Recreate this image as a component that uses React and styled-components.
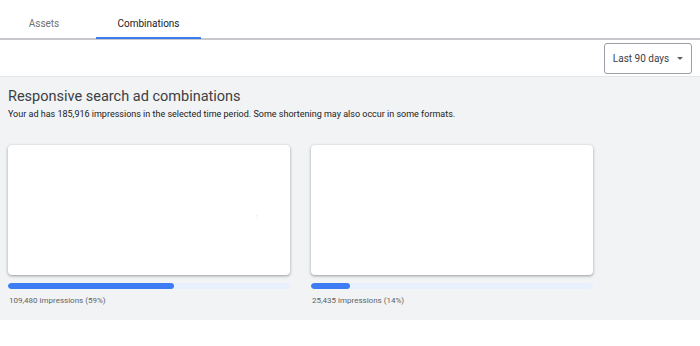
import styled, { createGlobalStyle } from "styled-components";

const Global = createGlobalStyle`
  body {
    margin: 0;
    background: #fff;
    font-family: "Roboto", "Liberation Sans", sans-serif;
  }
`;

const combos = [
  { impressions: "109,480", pct: 59, mark: true },
  { impressions: "25,435", pct: 14 },
];

export default function App() {
  return (
    <Page>
      <Global />
      <TabBar>
        <Tab width={88}>Assets</Tab>
        <Tab width={105} active>
          Combinations
        </Tab>
      </TabBar>
      <Toolbar>
        <RangeButton>
          Last 90 days
          <Caret />
        </RangeButton>
      </Toolbar>
      <Content>
        <Title>Responsive search ad combinations</Title>
        <Subtitle>
          Your ad has 185,916 impressions in the selected time period. Some
          shortening may also occur in some formats.
        </Subtitle>
        <Cards>
          {combos.map((c) => (
            <Combo key={c.impressions}>
              <Card>{c.mark && <Mark>:</Mark>}</Card>
              <Track>
                <Fill style={{ width: `${c.pct}%` }} />
              </Track>
              <Label>
                {c.impressions} impressions ({c.pct}%)
              </Label>
            </Combo>
          ))}
        </Cards>
      </Content>
    </Page>
  );
}

const Page = styled.div`
  width: 700px;
  height: 346px;
  background: #fff;
`;

const TabBar = styled.div`
  display: flex;
  gap: 8px;
  height: 38px;
  border-bottom: 2px solid #c6c8cb;
`;

const Tab = styled.div`
  width: ${(p) => p.width}px;
  display: flex;
  align-items: center;
  justify-content: center;
  padding-top: 8px;
  box-sizing: border-box;
  font-size: 10px;
  color: ${(p) => (p.active ? "#202124" : "#6f7276")};
  box-shadow: ${(p) => (p.active ? "inset 0 -2px 0 #3b7cf0" : "none")};
  margin-bottom: -1px;
`;

const Toolbar = styled.div`
  height: 36px;
  display: flex;
  align-items: center;
  justify-content: flex-end;
  padding-right: 8px;
  border-bottom: 1px solid #e3e5e8;
`;

const RangeButton = styled.div`
  width: 86px;
  height: 29px;
  border: 1px solid #9aa0a6;
  border-radius: 3px;
  display: flex;
  align-items: center;
  justify-content: center;
  gap: 8px;
  font-size: 10px;
  color: #3c4043;
`;

const Caret = styled.span`
  width: 0;
  height: 0;
  border-left: 3px solid transparent;
  border-right: 3px solid transparent;
  border-top: 3px solid #5f6368;
`;

const Content = styled.div`
  background: #f1f3f4;
  height: 243px;
  padding: 11px 8px 0;
  box-sizing: border-box;
`;

const Title = styled.h1`
  margin: 0;
  font-size: 14.5px;
  font-weight: 400;
  color: #3c4043;
  line-height: 18px;
`;

const Subtitle = styled.p`
  margin: 2px 0 0;
  font-size: 9px;
  color: #202124;
  line-height: 12px;
`;

const Cards = styled.div`
  display: grid;
  grid-template-columns: 282px 282px;
  gap: 21px;
  margin-top: 25px;
`;

const Combo = styled.div`
  display: flex;
  flex-direction: column;
`;

const Card = styled.div`
  position: relative;
  height: 130px;
  background: #fff;
  border-radius: 4px;
  box-shadow: 0 1px 2px rgba(60, 64, 67, 0.3), 0 1px 3px 1px rgba(60, 64, 67, 0.15);
`;

const Mark = styled.span`
  position: absolute;
  left: 248px;
  top: 67px;
  font-size: 6px;
  color: #b0b3b8;
`;

const Track = styled.div`
  margin-top: 8px;
  height: 6px;
  border-radius: 3px;
  background: #e8f0fe;
  overflow: hidden;
`;

const Fill = styled.div`
  height: 100%;
  border-radius: 3px;
  background: #3d7cf2;
`;

const Label = styled.div`
  margin-top: 7px;
  font-size: 8px;
  color: #5f6368;
  padding-left: 1px;
`;
